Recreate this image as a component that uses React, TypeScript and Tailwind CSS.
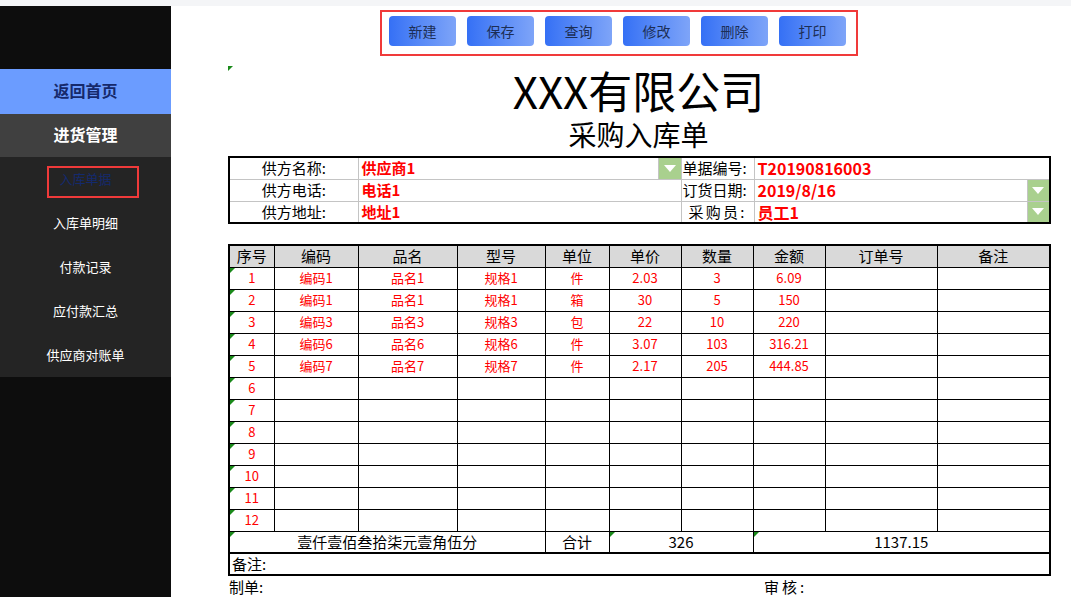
import React from "react";

const font = { fontFamily: '"Noto Sans CJK SC", "Noto Sans", sans-serif' };

const navItems = ["入库单据", "入库单明细", "付款记录", "应付款汇总", "供应商对账单"];
const buttons = ["新建", "保存", "查询", "修改", "删除", "打印"];

const rows = [
  ["1", "编码1", "品名1", "规格1", "件", "2.03", "3", "6.09"],
  ["2", "编码1", "品名1", "规格1", "箱", "30", "5", "150"],
  ["3", "编码3", "品名3", "规格3", "包", "22", "10", "220"],
  ["4", "编码6", "品名6", "规格6", "件", "3.07", "103", "316.21"],
  ["5", "编码7", "品名7", "规格7", "件", "2.17", "205", "444.85"],
];

const headers = ["序号", "编码", "品名", "型号", "单位", "单价", "数量", "金额", "订单号", "备注"];
const colWidths = [45, 84, 99, 88, 64, 72, 72, 72, 112, 113];

const Tri = () => (
  <span className="absolute left-0 top-0 w-0 h-0 border-t-[5px] border-t-[#1a8a1a] border-r-[5px] border-r-transparent" />
);

const Drop = () => (
  <div className="h-full w-full bg-[#a9d08e] flex items-center justify-center">
    <span className="w-0 h-0 border-l-[6px] border-l-transparent border-r-[6px] border-r-transparent border-t-[7px] border-t-white" />
  </div>
);

function Sidebar() {
  return (
    <aside className="w-[171px] shrink-0 bg-[#0d0d0d] flex flex-col">
      <div className="h-[63px]" />
      <div className="h-[45px] pb-[3px] bg-[#6b9cff] flex items-center justify-center text-[16px] font-bold text-[#16296b]">
        返回首页
      </div>
      <div className="h-[43px] pb-[4px] bg-[#404040] flex items-center justify-center text-[16px] font-bold text-white">
        进货管理
      </div>
      <div className="bg-[#242424]">
        {navItems.map((item, i) => (
          <div
            key={item}
            className={`relative h-[44px] flex items-center justify-center text-[13px] ${
              i === 0 ? "text-[#142a6e]" : "text-white"
            }`}
          >
            {item}
            {i === 0 && (
              <span className="absolute left-[47px] top-[9px] w-[92px] h-[32px] border-2 border-[#f03a3a]" />
            )}
          </div>
        ))}
      </div>
    </aside>
  );
}

function Toolbar() {
  return (
    <div className="ml-[152px] mt-[4px] w-[478px] h-[46px] border-2 border-[#f03a3a] flex items-start gap-[11px] pl-[7px] pt-[4px]">
      {buttons.map((b) => (
        <button
          key={b}
          className="w-[67px] h-[30px] rounded-[4px] bg-gradient-to-r from-[#3570f5] to-[#7ea4f8] text-[14px] text-[#1c2e55]"
        >
          {b}
        </button>
      ))}
    </div>
  );
}

function InfoTable() {
  const label = "border-r border-b border-[#c4c4c4] text-center text-[15px] text-black h-[22px] p-0";
  const value = "border-r border-b border-[#c4c4c4] text-left text-[15px] font-bold text-[#ff0000] pl-[3px] h-[22px] p-0";
  return (
    <table className="table-fixed border-collapse w-[821px] border-2 border-black leading-[20px]">
      <colgroup>
        <col className="w-[129px]" />
        <col className="w-[300px]" />
        <col className="w-[23px]" />
        <col className="w-[73px]" />
        <col className="w-[273px]" />
        <col className="w-[23px]" />
      </colgroup>
      <tbody>
        <tr>
          <td className={label}>供方名称:</td>
          <td className={value}>供应商1</td>
          <td className="border-r border-b border-[#c4c4c4] p-0 h-[22px]"><Drop /></td>
          <td className={`${label} text-left pl-[1px]`}>单据编号:</td>
          <td className={`${value} text-[16px]`} colSpan={2}>T20190816003</td>
        </tr>
        <tr>
          <td className={label}>供方电话:</td>
          <td className={value} colSpan={2}>电话1</td>
          <td className={`${label} text-left pl-[1px]`}>订货日期:</td>
          <td className={`${value} text-[16px]`}>2019/8/16</td>
          <td className="border-b border-[#c4c4c4] p-0 h-[22px]"><Drop /></td>
        </tr>
        <tr>
          <td className={label}>供方地址:</td>
          <td className={value} colSpan={2}>地址1</td>
          <td className={`${label} text-left pl-[7px] tracking-[0.15em]`}>采购员:</td>
          <td className={`${value} text-[16px]`}>员工1</td>
          <td className="border-b border-[#c4c4c4] p-0 h-[22px]"><Drop /></td>
        </tr>
      </tbody>
    </table>
  );
}

function ItemTable() {
  const cell = "border border-black h-[22px] p-0 text-center";
  const empty = Array.from({ length: 7 }, (_, i) => [String(i + 6), "", "", "", "", "", "", ""]);
  const all = [...rows, ...empty];
  return (
    <table className="table-fixed border-collapse w-[821px] border-2 border-black leading-[20px]">
      <colgroup>
        {colWidths.map((w, i) => (
          <col key={i} style={{ width: w }} />
        ))}
      </colgroup>
      <thead>
        <tr className="bg-[#d9d9d9]">
          {headers.map((h) => (
            <th key={h} className={`${cell} text-[15px] font-normal text-black`}>
              {h}
            </th>
          ))}
        </tr>
      </thead>
      <tbody>
        {all.map((r) => (
          <tr key={r[0]}>
            {r.map((v, j) => (
              <td key={j} className={`${cell} text-[13px] text-[#ff0000] ${j === 0 ? "relative" : ""}`}>
                {j === 0 && <Tri />}
                {v}
              </td>
            ))}
            <td className={cell} />
            <td className={cell} />
          </tr>
        ))}
        <tr>
          <td colSpan={4} className={`${cell} relative text-[15px] text-black border-b-2`}>
            <Tri />
            壹仟壹佰叁拾柒元壹角伍分
          </td>
          <td className={`${cell} text-[15px] text-black border-b-2`}>合计</td>
          <td colSpan={2} className={`${cell} relative text-[15px] text-black border-b-2`}>
            <Tri />
            326
          </td>
          <td colSpan={3} className={`${cell} relative text-[15px] text-black border-b-2`}>
            <Tri />
            1137.15
          </td>
        </tr>
        <tr>
          <td colSpan={10} className="border-2 border-black h-[22px] p-0 pl-[2px] text-left text-[15px] text-black">
            备注:
          </td>
        </tr>
      </tbody>
    </table>
  );
}

export default function App() {
  return (
    <div className="w-[1071px] h-[597px] overflow-hidden bg-white" style={font}>
      <div className="h-[6px] bg-[#f4f5f7]" />
      <div className="flex h-[591px]">
        <Sidebar />
        <main className="flex-1 pl-[57px]">
          <div className="w-[821px]">
            <Toolbar />
            <div className="relative mt-[10px] h-[90px] flex flex-col items-center">
              <Tri />
              <div className="text-[44px] leading-[48px] text-black">XXX有限公司</div>
              <div className="mt-[4px] text-[28px] leading-[32px] text-black">采购入库单</div>
            </div>
            <InfoTable />
            <div className="h-[20px]" />
            <ItemTable />
            <div className="flex text-[15px] text-black leading-[20px] mt-[1px]">
              <span className="w-[536px] pl-[1px]">制单:</span>
              <span className="tracking-[0.2em]">审核:</span>
            </div>
          </div>
        </main>
      </div>
    </div>
  );
}
